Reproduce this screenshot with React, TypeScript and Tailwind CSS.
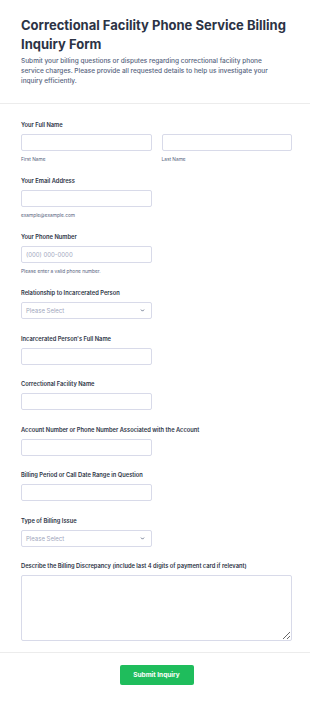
import React from "react";

const Label = ({ children }: { children: React.ReactNode }) => (
  <div className="text-[5.75px] leading-[8px] font-semibold text-[#2c3345] mb-[5px]">{children}</div>
);

const Sub = ({ children }: { children: React.ReactNode }) => (
  <div className="text-[4.8px] leading-[6px] text-[#57647e] mt-[4.5px]">{children}</div>
);

const inputCls =
  "h-[17px] border border-[#d8dae9] rounded-[2px] bg-white px-[4px] text-[6px] outline-none";

const Select = () => (
  <div className={inputCls + " w-[131px] flex items-center justify-between"}>
    <span className="text-[#a0a6bd] text-[6px]">Please Select</span>
    <svg width="5" height="5" viewBox="0 0 24 24" fill="none" stroke="#57647e" strokeWidth="4" strokeLinecap="round" strokeLinejoin="round" className="mr-[2px]">
      <path d="M6 9l6 6 6-6" />
    </svg>
  </div>
);

const App = () => {
  return (
    <div className="min-h-[702px] bg-white font-['Inter',sans-serif]">
      <div className="px-[21px] pt-[16px] pb-[17px]">
        <h1 className="text-[13px] leading-[18.5px] font-bold text-[#2c3345]">
          Correctional Facility Phone Service Billing Inquiry Form
        </h1>
        <p className="mt-[2.5px] max-w-[256px] text-[6.5px] leading-[10.3px] font-medium text-[#57647e]">
          Submit your billing questions or disputes regarding correctional facility phone service charges. Please provide all requested details to help us investigate your inquiry efficiently.
        </p>
      </div>
      <div className="border-t border-[#ececec]" />

      <div className="pl-[21px] pr-[18px] pt-[17px] pb-[11px] flex flex-col gap-[15.5px]">
        <div>
          <Label>Your Full Name</Label>
          <div className="grid grid-cols-2 gap-[10px]">
            <div>
              <input className={inputCls + " w-full block"} />
              <Sub>First Name</Sub>
            </div>
            <div>
              <input className={inputCls + " w-full block"} />
              <Sub>Last Name</Sub>
            </div>
          </div>
        </div>

        <div>
          <Label>Your Email Address</Label>
          <input className={inputCls + " w-[131px] block"} />
          <Sub>example@example.com</Sub>
        </div>

        <div>
          <Label>Your Phone Number</Label>
          <input className={inputCls + " w-[131px] block placeholder:text-[#a0a6bd]"} placeholder="(000) 000-0000" />
          <Sub>Please enter a valid phone number.</Sub>
        </div>

        <div>
          <Label>Relationship to Incarcerated Person</Label>
          <Select />
        </div>

        <div>
          <Label>Incarcerated Person's Full Name</Label>
          <input className={inputCls + " w-[131px] block"} />
        </div>

        <div>
          <Label>Correctional Facility Name</Label>
          <input className={inputCls + " w-[131px] block"} />
        </div>

        <div>
          <Label>Account Number or Phone Number Associated with the Account</Label>
          <input className={inputCls + " w-[131px] block"} />
        </div>

        <div>
          <Label>Billing Period or Call Date Range in Question</Label>
          <input className={inputCls + " w-[131px] block"} />
        </div>

        <div>
          <Label>Type of Billing Issue</Label>
          <Select />
        </div>

        <div>
          <Label>Describe the Billing Discrepancy (include last 4 digits of payment card if relevant)</Label>
          <textarea className="block w-full h-[66px] border border-[#d8dae9] rounded-[2px] outline-none resize-y" />
        </div>
      </div>

      <div className="border-t border-[#ececec]" />
      <div className="flex justify-center pl-[21px] pr-[18px] pt-[12px]">
        <button className="w-[74px] h-[20px] rounded-[2px] bg-[#1fbd5c] text-white text-[6.5px] font-bold">
          Submit Inquiry
        </button>
      </div>
    </div>
  );
};

export default App;
